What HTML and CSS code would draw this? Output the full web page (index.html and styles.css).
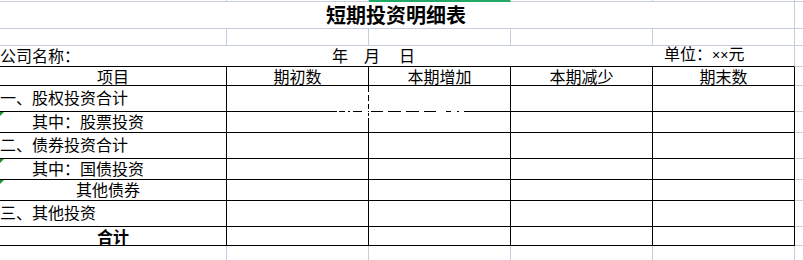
FILE: index.html
```html
<!DOCTYPE html>
<html lang="zh-CN">
<head>
<meta charset="utf-8">
<title>短期投资明细表</title>
<link rel="stylesheet" href="styles.css">
</head>
<body>
<div class="sheet">
  <!-- row 0: sliver of previous row -->
  <div class="c"></div><div class="c"></div><div class="c sel"></div><div class="c"></div><div class="c"></div><div class="c f"></div>

  <!-- title -->
  <div class="c span5 ctr title">短期投资明细表</div><div class="c f"></div>

  <!-- empty row -->
  <div class="c"></div><div class="c"></div><div class="c"></div><div class="c"></div><div class="c"></div><div class="c f"></div>

  <!-- company row -->
  <div class="c span5 topline info-row">
    <div class="info">
      <span class="co">公司名称：</span>
      <span class="date"><span class="y">年</span><span class="m">月</span><span>日</span></span>
      <span class="unit">单位：<span class="x">××</span>元</span>
    </div>
  </div><div class="c f"></div>

  <!-- header -->
  <div class="c t ctr hd">项目</div>
  <div class="c t ctr hd">期初数</div>
  <div class="c t ctr hd">本期增加</div>
  <div class="c t ctr hd">本期减少</div>
  <div class="c t ctr hd">期末数</div>
  <div class="c f"></div>

  <div class="c t r26">一、股权投资合计</div><div class="c t"></div><div class="c t"></div><div class="c t"></div><div class="c t"></div><div class="c f"></div>
  <div class="c t r21 i2 mark">其中：股票投资</div><div class="c t"></div><div class="c t"></div><div class="c t"></div><div class="c t"></div><div class="c f"></div>
  <div class="c t r26">二、债券投资合计</div><div class="c t"></div><div class="c t"></div><div class="c t"></div><div class="c t"></div><div class="c f"></div>
  <div class="c t r21 i2 mark">其中：国债投资</div><div class="c t"></div><div class="c t"></div><div class="c t"></div><div class="c t"></div><div class="c f"></div>
  <div class="c t r21 i5 mark">其他债券</div><div class="c t"></div><div class="c t"></div><div class="c t"></div><div class="c t"></div><div class="c f"></div>
  <div class="c t r26">三、其他投资</div><div class="c t"></div><div class="c t"></div><div class="c t"></div><div class="c t"></div><div class="c f"></div>
  <div class="c t ctr total"><span>合计</span></div><div class="c t"></div><div class="c t"></div><div class="c t"></div><div class="c t"></div><div class="c f"></div>

  <!-- trailing row -->
  <div class="c nb"></div><div class="c nb"></div><div class="c nb"></div><div class="c nb"></div><div class="c nb"></div><div class="c f nb"></div>

  <svg class="pb" width="803" height="260" viewBox="0 0 803 260" shape-rendering="crispEdges" aria-hidden="true">
    <rect x="337" y="111" width="133" height="1" fill="#fff"/>
    <rect x="368" y="86" width="1" height="36" fill="#fff"/>
    <g fill="#000">
      <rect x="339" y="111" width="6" height="1"/>
      <rect x="348" y="111" width="2" height="1"/>
      <rect x="353" y="111" width="9" height="1"/>
      <rect x="371" y="111" width="12" height="1"/>
      <rect x="388" y="111" width="13" height="1"/>
      <rect x="406" y="111" width="13" height="1"/>
      <rect x="424" y="111" width="12" height="1"/>
      <rect x="446" y="111" width="5" height="1"/>
      <rect x="457" y="111" width="2" height="1"/>
      <rect x="464" y="111" width="6" height="1"/>
      <rect x="368" y="86" width="1" height="6"/>
      <rect x="368" y="95" width="1" height="6"/>
      <rect x="368" y="104" width="1" height="5"/>
      <rect x="368" y="111" width="1" height="1"/>
      <rect x="368" y="113" width="1" height="3"/>
      <rect x="368" y="118" width="1" height="4"/>
    </g>
  </svg>
</div>
</body>
</html>
```

FILE: styles.css
```css
:root {
  --grid: #c6cddd;
}
html, body {
  margin: 0;
  padding: 0;
  background: #fff;
}
body {
  width: 803px;
  height: 260px;
  overflow: hidden;
  font-family: "Noto Sans CJK SC", "Noto Sans", sans-serif;
  font-size: 16px;
  color: #000;
}
.sheet {
  position: relative;
  display: grid;
  grid-template-columns: 227px 142px 142px 142px 142px 8px;
  grid-template-rows: 2px 27px 17px 21px 19px 26px 21px 26px 21px 21px 26px 19px 14px;
  width: 803px;
  height: 260px;
}
.c {
  box-sizing: border-box;
  border-right: 1px solid var(--grid);
  border-bottom: 1px solid var(--grid);
  display: flex;
  align-items: flex-end;
  line-height: 16px;
  white-space: nowrap;
  position: relative;
}
.c.f {
  border-right: none;
}
.c.nb {
  border-bottom: none;
}
.c.t {
  border-right-color: #000;
  border-bottom-color: #000;
}
.sel {
  background: #22a865;
  border-bottom-color: #22a865;
}
.span5 {
  grid-column: 1 / 6;
}
.ctr {
  justify-content: center;
}
.title {
  font-size: 20px;
  line-height: 20px;
  font-weight: 700;
  padding-bottom: 3px;
  padding-right: 2px;
}
.topline {
  border-bottom-color: #000;
}
.info-row {
  padding-bottom: 3px;
}
.info {
  display: flex;
  align-items: flex-end;
  width: 100%;
}
.co {
  width: 332px;
  flex: none;
}
.date {
  width: 332px;
  flex: none;
  display: flex;
}
.date .y {
  margin-right: 16px;
}
.date .m {
  margin-right: 19px;
}
.unit {
  flex: none;
}
.x {
  font-family: "Liberation Sans", sans-serif;
  font-size: 14px;
}
.hd {
  padding-bottom: 1px;
}
.r26 {
  padding-bottom: 6px;
}
.r21 {
  padding-bottom: 3px;
}
.total {
  font-weight: 700;
  overflow: hidden;
}
.total span {
  margin-bottom: 1px;
}
.i2 {
  padding-left: 32px;
}
.i5 {
  padding-left: 76px;
}
.mark::before {
  content: "";
  position: absolute;
  left: 0;
  top: 0;
  border-top: 4px solid #1f8f2f;
  border-right: 4px solid transparent;
}
.pb {
  position: absolute;
  left: 0;
  top: 0;
  pointer-events: none;
}
```
